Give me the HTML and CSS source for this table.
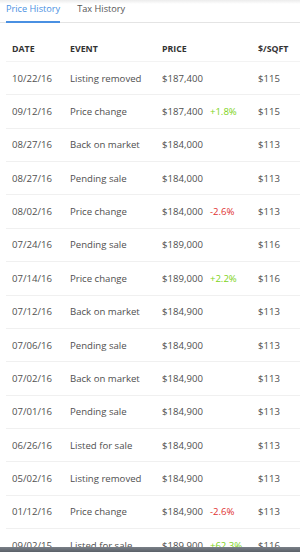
FILE: index.html
```html
<!DOCTYPE html>
<html>
<head>
<meta charset="utf-8">
<link rel="stylesheet" href="styles.css">
</head>
<body>
<div class="tabs">
  <div class="tab active">Price History</div>
  <div class="tab">Tax History</div>
</div>
<div class="table">
  <div class="row head">
    <div class="c-date">DATE</div><div class="c-event">EVENT</div><div class="c-price">PRICE</div><div class="c-sqft">$/SQFT</div>
  </div>
  <div class="row"><div class="c-date">10/22/16</div><div class="c-event">Listing removed</div><div class="c-price">$187,400</div><div class="c-sqft">$115</div></div>
  <div class="row"><div class="c-date">09/12/16</div><div class="c-event">Price change</div><div class="c-price">$187,400<span class="up">+1.8%</span></div><div class="c-sqft">$115</div></div>
  <div class="row"><div class="c-date">08/27/16</div><div class="c-event">Back on market</div><div class="c-price">$184,000</div><div class="c-sqft">$113</div></div>
  <div class="row"><div class="c-date">08/27/16</div><div class="c-event">Pending sale</div><div class="c-price">$184,000</div><div class="c-sqft">$113</div></div>
  <div class="row"><div class="c-date">08/02/16</div><div class="c-event">Price change</div><div class="c-price">$184,000<span class="down">-2.6%</span></div><div class="c-sqft">$113</div></div>
  <div class="row"><div class="c-date">07/24/16</div><div class="c-event">Pending sale</div><div class="c-price">$189,000</div><div class="c-sqft">$116</div></div>
  <div class="row"><div class="c-date">07/14/16</div><div class="c-event">Price change</div><div class="c-price">$189,000<span class="up">+2.2%</span></div><div class="c-sqft">$116</div></div>
  <div class="row"><div class="c-date">07/12/16</div><div class="c-event">Back on market</div><div class="c-price">$184,900</div><div class="c-sqft">$113</div></div>
  <div class="row"><div class="c-date">07/06/16</div><div class="c-event">Pending sale</div><div class="c-price">$184,900</div><div class="c-sqft">$113</div></div>
  <div class="row"><div class="c-date">07/02/16</div><div class="c-event">Back on market</div><div class="c-price">$184,900</div><div class="c-sqft">$113</div></div>
  <div class="row"><div class="c-date">07/01/16</div><div class="c-event">Pending sale</div><div class="c-price">$184,900</div><div class="c-sqft">$113</div></div>
  <div class="row"><div class="c-date">06/26/16</div><div class="c-event">Listed for sale</div><div class="c-price">$184,900</div><div class="c-sqft">$113</div></div>
  <div class="row"><div class="c-date">05/02/16</div><div class="c-event">Listing removed</div><div class="c-price">$184,900</div><div class="c-sqft">$113</div></div>
  <div class="row"><div class="c-date">01/12/16</div><div class="c-event">Price change</div><div class="c-price">$184,900<span class="down">-2.6%</span></div><div class="c-sqft">$113</div></div>
  <div class="row"><div class="c-date">09/02/15</div><div class="c-event">Listed for sale</div><div class="c-price">$189,900<span class="up">+62.3%</span></div><div class="c-sqft">$116</div></div>
</div>
<div class="bottombar"></div>
</body>
</html>
```
FILE: styles.css
```css
html, body {
  margin: 0;
  padding: 0;
  background: #fff;
  overflow: hidden;
  height: 552px;
}
body {
  font-family: "Open Sans", "Liberation Sans", sans-serif;
  color: #4f4f4f;
  font-size: 9.6px;
  background: linear-gradient(#ececec, #fff 4px);
}
.tabs {
  display: flex;
  gap: 17px;
  padding: 0 6px;
  border-bottom: 1px solid #e4e4e4;
  height: 22px;
}
.tab {
  font-size: 9.2px;
  color: #555;
  line-height: 18px;
  box-sizing: border-box;
}
.tab.active {
  color: #4a90e2;
  border-bottom: 2px solid #4a90e2;
  height: 23px;
}
.table {
  padding: 0 0 0 6px;
  margin-top: 15px;
}
.row {
  display: flex;
  align-items: center;
  height: 33.36px;
  border-bottom: 1px solid #f0f0f0;
  box-sizing: border-box;
  padding-left: 6px;
}
.row.head {
  height: 24px;
  font-weight: 700;
  color: #333;
  font-size: 8.8px;
  border-bottom-color: #f3f3f3;
  align-items: flex-start;
  padding-top: 5px;
}
.c-date { width: 58px; }
.c-event { width: 92px; }
.c-price { width: 96px; white-space: nowrap; }
.c-sqft { white-space: nowrap; }
.up { color: #7ed321; margin-left: 7px; }
.down { color: #e0312f; margin-left: 7px; }
.bottombar {
  position: fixed;
  left: 0;
  right: 0;
  bottom: 0;
  height: 5px;
  background: linear-gradient(#7a8088, #5a6068);
}
```
